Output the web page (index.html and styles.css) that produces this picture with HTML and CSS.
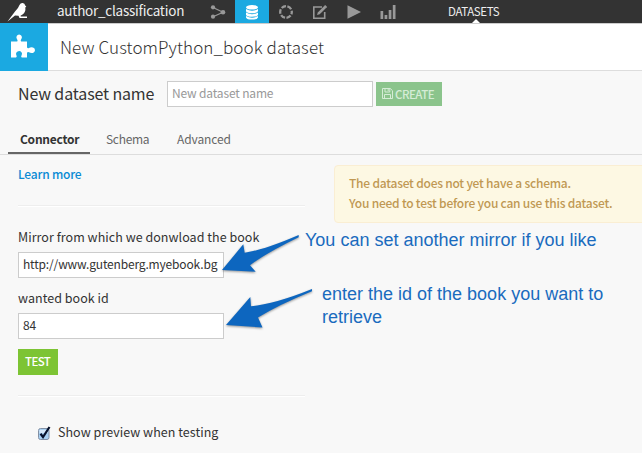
FILE: index.html
```html
<!DOCTYPE html>
<html lang="en">
<head>
<meta charset="utf-8">
<title>New dataset</title>
<link rel="stylesheet" href="styles.css">
</head>
<body>
<header class="topbar">
  <svg class="bird" width="24" height="22" viewBox="0 0 24 22"><path d="M.5 20.500 8 10.500Q11.500 7 12.500 4Q13.500 1.800 15.700 2Q17.800 2.200 18.200 4.500L19.300 5.500 18.300 6.500Q19 11 15.500 13.500L13.500 14.700 13.800 15.500H20V17H12.500L11.500 14.700 8 14.500Z" fill="#fff"/></svg>
  <span class="project">author_classification</span>
  <nav class="nav">
    <a class="nav-item"><svg width="16" height="16" viewBox="0 0 16 16" fill="#999"><path d="M3 3.5 13 8.3 3 12.8" fill="none" stroke="#999" stroke-width="1.2"/><circle cx="3" cy="3.3" r="2.1"/><circle cx="3" cy="12.7" r="2.1"/><circle cx="13" cy="8.2" r="2.3"/></svg></a>
    <a class="nav-item active"><svg width="14" height="16" viewBox="0 0 14 16" fill="#fff"><ellipse cx="7" cy="3.3" rx="6" ry="2.3"/><path d="M1 5Q7 8.4 13 5V7.3Q12 9.3 7 9.3T1 7.3ZM1 8.6Q7 12 13 8.6V11Q12 12.8 7 12.8T1 11ZM1 12Q7 15.4 13 12V13.4Q12 15.6 7 15.6T1 13.4Z"/></svg></a>
    <a class="nav-item"><svg width="16" height="16" viewBox="0 0 16 16"><circle cx="8" cy="8" r="5.8" fill="none" stroke="#999" stroke-width="2.3" stroke-dasharray="4.6 1.473" stroke-dashoffset="2.3"/></svg></a>
    <a class="nav-item"><svg width="16" height="16" viewBox="0 0 16 16" fill="none" stroke="#999"><path d="M10 3H1.8V14.2H12.7V8" stroke-width="1.6"/><path d="M5 11 5.8 8.4 12.4 1.8 14.3 3.7 7.7 10.3Z" fill="#999" stroke="none"/><path d="M12.7 1.4 14.7 3.4" stroke-width="1.4"/></svg></a>
    <a class="nav-item"><svg width="16" height="16" viewBox="0 0 16 16"><path d="M1.5 1.2 15 8 1.5 14.8Z" fill="#999"/></svg></a>
    <a class="nav-item"><svg width="16" height="16" viewBox="0 0 16 16" fill="#999"><path d="M.5 7h2.700v8H.5zM4.600 11h2.700v4H4.600zM8.700 6h2.700v9H8.700zM12.800 1h2.700V15h-2.700z"/></svg></a>
  </nav>
  <span class="section">DATASETS</span>
</header>
<div class="titlebar">
  <div class="plugin"><svg width="26" height="26" viewBox="0 0 26 26"><path d="M1 7.5H7.2Q8 7 7.3 5.8Q5.8 3.8 6.7 2Q7.5 .5 9.1 .5T11.6 2Q12.5 3.8 11 5.8Q10.3 7 11.2 7.5H17V13.2Q17.5 14.8 19 14Q20.8 12.8 23 13.5Q25 14.3 25 16.2T23 18.9Q20.8 19.5 19 18.3Q17.5 17.5 17 19V23.5H11.8Q10.6 23 11.5 21.5Q12.6 19.5 11.5 18.2Q9.8 16.4 7.6 17.5Q5.2 18.8 6.5 21.5Q7.2 23 6 23.5H1Z" fill="#fff"/></svg></div>
  <h1 class="title">New CustomPython_book dataset</h1>
</div>
<div class="name-row">
  <label class="name-label">New dataset name</label>
  <div class="input name-input">New dataset name</div>
  <div class="create"><svg width="11" height="11" viewBox="0 0 11 11" fill="none" stroke="#d5ecd6"><path d="M.5.5H8.3L10.5 2.7V10.5H.5ZM3 .5V4H7.8V.5M2.5 10.5V6.5H8.5V10.5M6.2 1V3"/></svg><span>CREATE</span></div>
</div>
<nav class="tabs">
  <a class="tab current">Connector</a>
  <a class="tab schema">Schema</a>
  <a class="tab">Advanced</a>
</nav>
<main class="content">
  <section class="settings">
    <a class="learn">Learn more</a>
    <div class="rule"></div>
    <label class="field-label first">Mirror from which we donwload the book</label>
    <div class="input">http://www.gutenberg.myebook.bg</div>
    <label class="field-label">wanted book id</label>
    <div class="input">84</div>
    <div class="test">TEST</div>
    <div class="rule lower"></div>
    <div class="preview">
      <svg width="16" height="16" viewBox="0 0 16 16"><rect x="1.5" y="3.5" width="10.500" height="11" rx="2" fill="#a9d0f2" stroke="#8290a5"/><path d="M2.5 5H11V8H2.5Z" fill="#d5e8f9"/><path d="M3.500 8.800 6 12 12.500 2" fill="none" stroke="#07122c" stroke-width="2.2"/></svg>
      <span>Show preview when testing</span>
    </div>
  </section>
  <aside class="alert">
    <p>The dataset does not yet have a schema.</p>
    <p>You need to test before you can use this dataset.</p>
  </aside>
</main>
<svg class="arrows" width="110" height="110" viewBox="0 0 110 110">
  <path d="M0 35 21.300 9.300 22.700 17.700Q42 15 76.700 0V2.200Q44 18 28 30.300L33.700 36.700Z"/>
  <path d="M4 90 28.300 62 29 71.300Q53 69 90 54V56.200Q56 70 36 82.500L40.500 92.500Z"/>
</svg>
<p class="note note-mirror">You can set another mirror if you like</p>
<p class="note note-id">enter the id of the book you want to<br>retrieve</p>
</body>
</html>
```
FILE: styles.css
```css
* { box-sizing: border-box; }
body {
  margin: 0;
  width: 642px;
  height: 453px;
  overflow: hidden;
  position: relative;
  background: #f8f8f8;
  color: #333;
  font-family: "Noto Sans CJK SC", "Open Sans", sans-serif;
  font-size: 12.5px;
  line-height: 20px;
  white-space: nowrap;
}
p, h1 { margin: 0; }
svg { display: block; flex: none; }
.topbar { display: flex; height: 23px; background: #333; }
.bird { margin: 1px 0 0 7px; }
.project { width: 144px; margin-left: 26px; color: #eee; font-size: 13.5px; letter-spacing: -.24px; line-height: 21px; }
.nav { display: flex; }
.nav-item { width: 34px; height: 23px; display: flex; align-items: center; justify-content: center; }
.nav-item.active { background: #1ba9e1; }
.section {
  position: relative;
  margin-left: 43px;
  color: #eee;
  font-size: 11.5px;
  letter-spacing: -.4px;
  line-height: 23px;
}
.section::after {
  content: "";
  position: absolute;
  left: 24px;
  top: 19px;
  border: 4px solid transparent;
  border-top: 0;
  border-bottom-color: #fff;
}
.titlebar {
  display: flex;
  height: 48px;
  background: #fff;
  border-top: 1px solid #ccc;
  border-bottom: 1px solid #ddd;
}
.plugin { width: 48px; height: 48px; margin-top: -1px; padding: 11px 0 0 10px; background: #1ba9e1; }
.title { margin-left: 12px; font-size: 17px; font-weight: 300; letter-spacing: .09px; line-height: 46px; color: #333; }
.name-row { display: flex; height: 36px; margin-top: 10px; padding-left: 18px; }
.name-label { width: 149px; font-size: 16px; letter-spacing: -.14px; line-height: 25px; }
.input {
  width: 206px;
  height: 26px;
  padding-left: 4px;
  border: 1px solid #ccc;
  background: #fff;
  line-height: 22px;
  font-size: 12px;
  letter-spacing: -.16px;
}
.name-input { color: #999; }
.create {
  display: flex;
  width: 66px;
  height: 24px;
  margin: 1px 0 0 3px;
  padding: 6px 0 0 6px;
  gap: 2px;
  background: #8bc48c;
  color: #d5ecd6;
  font-size: 11.5px;
  font-weight: 500;
  letter-spacing: -.5px;
}
.create span { line-height: 12px; }
.tabs { display: flex; height: 38px; padding-left: 8px; border-bottom: 1px solid #ddd; font-size: 12px; }
.tab { color: #666; line-height: 44px; letter-spacing: -.1px; }
.tab.schema { width: 71px; letter-spacing: -.3px; }
.tab.current { width: 82px; height: 37px; padding-left: 12px; margin-right: 16px; border-bottom: 2px solid #666; color: #333; font-weight: 700; letter-spacing: -.25px; line-height: 43px; }
.content { display: flex; padding-left: 18px; }
.settings { flex: none; width: 316px; }
.learn { display: block; height: 50px; padding-top: 9px; color: #0a8bd4; font-size: 12px; font-weight: 500; letter-spacing: -.2px; line-height: 19px; }
.rule { width: 287px; height: 2px; background: #eee; border-bottom: 1px solid #fff; }
.field-label { display: block; height: 35px; padding-top: 10px; line-height: 20px; letter-spacing: .04px; }
.field-label.first { height: 45px; padding-top: 20px; }
.test { width: 40px; height: 26px; margin-top: 10px; padding-left: 7px; background: #7dc434; color: #fff; font-size: 11.5px; font-weight: 500; letter-spacing: -.6px; line-height: 25px; }
.lower { margin-top: 20px; }
.preview { display: flex; height: 30px; margin-top: 25px; padding-left: 19px; gap: 5px; }
.preview svg { margin-top: 3px; }
.preview span { line-height: 20px; letter-spacing: .04px; }
.alert {
  flex: none;
  width: 320px;
  height: 58px;
  margin-top: 10px;
  padding: 7px 0 0 14px;
  border: 1px solid #faeed3;
  border-radius: 4px;
  background: #fdf8e3;
  color: #c09853;
  font-size: 12px;
  font-weight: 500;
  letter-spacing: -.22px;
  line-height: 20px;
}
.arrows { position: absolute; left: 222px; top: 235px; fill: #0d66bf; filter: drop-shadow(0 1px 1px rgba(0, 0, 0, .4)); }
.note { position: absolute; color: #1a6bbe; font-family: "Liberation Sans", Arial, sans-serif; font-size: 18px; line-height: 23px; }
.note-mirror { left: 305px; top: 229px; }
.note-id { left: 322px; top: 283px; }
```
